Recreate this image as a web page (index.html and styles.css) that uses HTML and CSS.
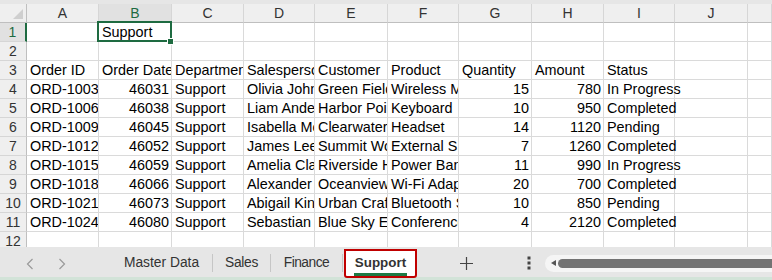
FILE: index.html
```html
<!DOCTYPE html>
<html lang="en">
<head>
  <meta charset="UTF-8">
  <meta name="viewport" content="width=device-width, initial-scale=1.0">
  <title>Support</title>

  <link rel="stylesheet" href="styles.css">

</head>
<body>
  <div class="sheet">
    <div class="top-strip"></div>
    <div class="grid">
      <!-- column headers -->
      <div class="corner"><span class="tri"></span></div>
      <div class="ch">A</div>
      <div class="ch sel">B</div>
      <div class="ch">C</div>
      <div class="ch">D</div>
      <div class="ch">E</div>
      <div class="ch">F</div>
      <div class="ch">G</div>
      <div class="ch">H</div>
      <div class="ch">I</div>
      <div class="ch">J</div>
      <div class="ch"></div>

      <!-- row 1 -->
      <div class="rh sel">1</div>
      <div class="c"></div>
      <div class="c active">Support</div>
      <div class="c"></div><div class="c"></div><div class="c"></div><div class="c"></div>
      <div class="c"></div><div class="c"></div><div class="c"></div><div class="c"></div><div class="c"></div>

      <!-- row 2 -->
      <div class="rh">2</div>
      <div class="c"></div><div class="c"></div><div class="c"></div><div class="c"></div><div class="c"></div>
      <div class="c"></div><div class="c"></div><div class="c"></div><div class="c"></div><div class="c"></div><div class="c"></div>

      <!-- row 3 -->
      <div class="rh">3</div>
      <div class="c">Order ID</div>
      <div class="c">Order Date</div>
      <div class="c">Department</div>
      <div class="c">Salesperson</div>
      <div class="c">Customer</div>
      <div class="c">Product</div>
      <div class="c">Quantity</div>
      <div class="c">Amount</div>
      <div class="c ov">Status</div>
      <div class="c"></div><div class="c"></div>

      <!-- row 4 -->
      <div class="rh">4</div>
      <div class="c">ORD-1003</div>
      <div class="c n">46031</div>
      <div class="c">Support</div>
      <div class="c">Olivia Johnson</div>
      <div class="c">Green Fields Co.</div>
      <div class="c">Wireless Mouse</div>
      <div class="c n">15</div>
      <div class="c n">780</div>
      <div class="c ov">In Progress</div>
      <div class="c"></div><div class="c"></div>

      <!-- row 5 -->
      <div class="rh">5</div>
      <div class="c">ORD-1006</div>
      <div class="c n">46038</div>
      <div class="c">Support</div>
      <div class="c">Liam Anderson</div>
      <div class="c">Harbor Point</div>
      <div class="c">Keyboard</div>
      <div class="c n">10</div>
      <div class="c n">950</div>
      <div class="c ov">Completed</div>
      <div class="c"></div><div class="c"></div>

      <!-- row 6 -->
      <div class="rh">6</div>
      <div class="c">ORD-1009</div>
      <div class="c n">46045</div>
      <div class="c">Support</div>
      <div class="c">Isabella Moore</div>
      <div class="c">Clearwater Inc.</div>
      <div class="c">Headset</div>
      <div class="c n">14</div>
      <div class="c n">1120</div>
      <div class="c ov">Pending</div>
      <div class="c"></div><div class="c"></div>

      <!-- row 7 -->
      <div class="rh">7</div>
      <div class="c">ORD-1012</div>
      <div class="c n">46052</div>
      <div class="c">Support</div>
      <div class="c">James Lee</div>
      <div class="c">Summit Works</div>
      <div class="c">External SSD</div>
      <div class="c n">7</div>
      <div class="c n">1260</div>
      <div class="c ov">Completed</div>
      <div class="c"></div><div class="c"></div>

      <!-- row 8 -->
      <div class="rh">8</div>
      <div class="c">ORD-1015</div>
      <div class="c n">46059</div>
      <div class="c">Support</div>
      <div class="c">Amelia Clark</div>
      <div class="c">Riverside Hotel</div>
      <div class="c">Power Bank</div>
      <div class="c n">11</div>
      <div class="c n">990</div>
      <div class="c ov">In Progress</div>
      <div class="c"></div><div class="c"></div>

      <!-- row 9 -->
      <div class="rh">9</div>
      <div class="c">ORD-1018</div>
      <div class="c n">46066</div>
      <div class="c">Support</div>
      <div class="c">Alexander Wright</div>
      <div class="c">Oceanview Ltd.</div>
      <div class="c">Wi-Fi Adapter</div>
      <div class="c n">20</div>
      <div class="c n">700</div>
      <div class="c ov">Completed</div>
      <div class="c"></div><div class="c"></div>

      <!-- row 10 -->
      <div class="rh">10</div>
      <div class="c">ORD-1021</div>
      <div class="c n">46073</div>
      <div class="c">Support</div>
      <div class="c">Abigail King</div>
      <div class="c">Urban Craft</div>
      <div class="c">Bluetooth Speaker</div>
      <div class="c n">10</div>
      <div class="c n">850</div>
      <div class="c ov">Pending</div>
      <div class="c"></div><div class="c"></div>

      <!-- row 11 -->
      <div class="rh">11</div>
      <div class="c">ORD-1024</div>
      <div class="c n">46080</div>
      <div class="c">Support</div>
      <div class="c">Sebastian Hall</div>
      <div class="c">Blue Sky Events</div>
      <div class="c">Conference Cam</div>
      <div class="c n">4</div>
      <div class="c n">2120</div>
      <div class="c ov">Completed</div>
      <div class="c"></div><div class="c"></div>

      <!-- row 12 -->
      <div class="rh">12</div>
      <div class="c"></div><div class="c"></div><div class="c"></div><div class="c"></div><div class="c"></div>
      <div class="c"></div><div class="c"></div><div class="c"></div><div class="c"></div><div class="c"></div><div class="c"></div>
    </div>
  </div>

  <div class="tabbar">
    <div class="nav">
      <svg width="8" height="12" viewBox="0 0 8 12"><path d="M6.5 1 L1.5 6 L6.5 11" fill="none" stroke="#9a9a9a" stroke-width="1.2"/></svg>
      <svg width="8" height="12" viewBox="0 0 8 12"><path d="M1.5 1 L6.5 6 L1.5 11" fill="none" stroke="#9a9a9a" stroke-width="1.2"/></svg>
    </div>
    <div class="tab master">Master Data</div>
    <div class="sep"></div>
    <div class="tab sales">Sales</div>
    <div class="sep"></div>
    <div class="tab finance">Finance</div>
    <div class="sep"></div>
    <div class="tab current"><span>Support</span></div>
    <div class="add">
      <svg width="13" height="13" viewBox="0 0 13 13"><path d="M6.5 0 V13 M0 6.5 H13" stroke="#444" stroke-width="1.2"/></svg>
    </div>
    <div class="more">
      <svg width="4" height="14" viewBox="0 0 4 14"><rect x="0.5" y="0.5" width="3" height="3" fill="#444"/><rect x="0.5" y="5.5" width="3" height="3" fill="#444"/><rect x="0.5" y="10.5" width="3" height="3" fill="#444"/></svg>
    </div>
    <div class="scroll">
      <span class="arrow"></span>
      <span class="thumb"></span>
    </div>
  </div>
  <div class="bottom-line"></div>
</body>
</html>
```

FILE: styles.css
```css
body{
  margin: 0;
  width: 772px;
  height: 280px;
  overflow: hidden;
  background: #ffffff;
  font-family: "Liberation Sans", Arial, sans-serif;
}

.sheet{
  height: 247px;
  overflow: hidden;
}

.top-strip{
  height: 4px;
  background: #e6e6e6;
}

/* column widths as Excel draws them (not all equal) */
.grid{
  display: grid;
  grid-template-columns: 27px 72px 73px 72px 71px 73px 71px 73px 72px 71px 73px 24px;
  grid-template-rows: 19px;
  grid-auto-rows: 19px;
}

.corner{
  background: #efefef;
  border-right: 1px solid #bfbfbf;
  border-bottom: 1px solid #bfbfbf;
  position: relative;
}

.corner .tri{
  position: absolute;
  right: 3px;
  bottom: 3px;
  width: 0;
  height: 0;
  border-left: 10px solid transparent;
  border-bottom: 10px solid #cfcfcf;
}

.ch{
  background: #efefef;
  border-right: 1px solid #d6d6d6;
  border-bottom: 1px solid #bfbfbf;
  color: #333;
  font-size: 14px;
  line-height: 18px;
  text-align: center;
}

.ch.sel{
  background: #e1e1e1;
  color: #1e6b41;
  border-bottom: 1px solid #1e6b41;
}

.rh{
  background: #efefef;
  border-right: 1px solid #bfbfbf;
  border-bottom: 1px solid #d6d6d6;
  color: #333;
  font-size: 14px;
  line-height: 18px;
  text-align: center;
}

.rh.sel{
  background: #e1e1e1;
  color: #1e6b41;
  border-right: 2px solid #1e6b41;
}

.c{
  border-right: 1px solid #dadada;
  border-bottom: 1px solid #dadada;
  font-size: 14.4px;
  line-height: 18px;
  padding: 0 2px 0 3px;
  white-space: nowrap;
  overflow: hidden;
  color: #000;
}

.c.n{
  text-align: right;
}

/* text of the last filled column runs into the empty one */
.c.ov{
  overflow: visible;
  position: relative;
  z-index: 1;
}

.c.active{
  position: relative;
  overflow: visible;
}

.c.active::before{
  content: "";
  position: absolute;
  left: -2px;
  top: -2px;
  right: -1px;
  bottom: -1px;
  border: 2px solid #1e6b41;
}

.c.active::after{
  content: "";
  position: absolute;
  right: -3px;
  bottom: -4px;
  width: 5px;
  height: 5px;
  background: #1e6b41;
  border: 1px solid #ffffff;
}

.tabbar{
  height: 30px;
  background: #e6e6e6;
  display: flex;
  align-items: center;
  color: #333;
  font-size: 13.8px;
}

.nav{
  width: 111px;
  margin-top: 3px;
  display: flex;
  gap: 24px;
  padding-left: 26px;
  box-sizing: border-box;
}

.tab{
  line-height: 28px;
  padding-top: 2px;
  text-align: center;
}

.tab.master{ width: 101px; }
.tab.sales{ width: 57px; letter-spacing: -0.3px; }
.tab.finance{ width: 71px; letter-spacing: -0.5px; }

.sep{
  width: 1px;
  height: 18px;
  margin-top: 2px;
  background: #c6c6c6;
}

.tab.current{
  width: 73px;
  margin-left: 1px;
  height: 29px;
  box-sizing: border-box;
  margin-top: 2px;
  padding-top: 0;
  background: #ffffff;
  border: 2px solid #c00000;
  border-radius: 0 0 3px 3px;
  font-weight: bold;
  font-size: 13.4px;
  line-height: 24px;
}

.tab.current span{
  display: inline-block;
  border-bottom: 3px solid #1e7a45;
  line-height: 20px;
  padding: 0 1px;
}

.add{
  width: 46px;
  margin-left: 26px;
  margin-top: 2px;
  display: flex;
  justify-content: center;
}

.more{
  margin-left: 38px;
  margin-top: 2px;
  display: flex;
}

.scroll{
  margin-left: 14px;
  flex: 1;
  height: 17px;
  margin-top: 2px;
  background: #f5f5f5;
  border-radius: 9px 0 0 9px;
  display: flex;
  align-items: center;
}

.scroll .arrow{
  width: 0;
  height: 0;
  margin-left: 6px;
  border-top: 3.5px solid transparent;
  border-bottom: 3.5px solid transparent;
  border-right: 5px solid #555;
}

.scroll .thumb{
  flex: 1;
  height: 9px;
  margin-left: 2px;
  background: #737373;
  border-radius: 5px 0 0 5px;
}

.bottom-line{
  height: 3px;
  background: #d2e3d8;
}
```
